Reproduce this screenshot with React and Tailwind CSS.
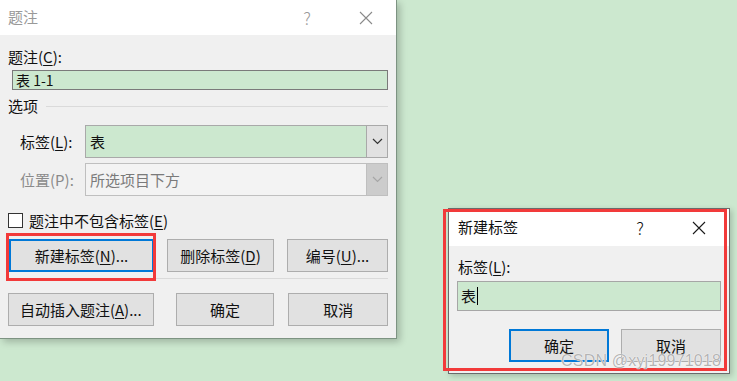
import React from "react";

const FONT = { fontFamily: '"Noto Sans CJK SC", "Noto Sans", sans-serif' };

const U = ({ children }) => <span className="underline underline-offset-2">{children}</span>;

const CloseIcon = ({ color = "#1a1a1a" }) => (
  <svg width="14" height="14" viewBox="0 0 14 14">
    <path d="M1 1L13 13M13 1L1 13" stroke={color} strokeWidth="1.1" fill="none" />
  </svg>
);

const Chevron = ({ color = "#333" }) => (
  <svg width="11" height="7" viewBox="0 0 11 7">
    <path d="M1 1L5.5 5.5L10 1" stroke={color} strokeWidth="1.2" fill="none" />
  </svg>
);

const Btn = ({ w, focus, className = "", children }) => (
  <div
    className={`h-[33px] flex items-center justify-center bg-[#e1e1e1] text-[15px] text-[#111] ${
      focus ? "border-2 border-[#0078d7]" : "border border-[#adadad]"
    } ${className}`}
    style={{ width: w }}
  >
    {children}
  </div>
);

function CaptionDialog() {
  return (
    <div className="absolute left-0 top-0 w-[397px] h-[339px] bg-[#f0f0f0] border-r border-b border-[#7d9382] shadow-[3px_3px_7px_rgba(0,0,0,0.22)] flex flex-col">
      {/* Title bar */}
      <div className="h-[35px] bg-white flex items-center pl-[8px] text-[15px] text-[#999]">
        <span>题注</span>
        <span className="ml-auto mr-[48px] text-[17px] text-[#9a9a9a] font-light">?</span>
        <span className="mr-[23px] flex"><CloseIcon color="#8a8a8a" /></span>
      </div>

      <div className="flex flex-col px-[8px] text-[15px] text-[#111] leading-[20px]">
        <div className="mt-[12px]">题注(<U>C</U>):</div>
        <div className="mt-[3px] ml-[4px] h-[20px] border border-[#7a7a7a] bg-[#cce8cf] flex items-center pl-[3px] text-[14px] leading-none">
          表 1-1
        </div>

        <div className="mt-[6px] flex items-center">
          <span>选项</span>
          <div className="flex-1 h-px bg-[#dadada] ml-[8px]" />
        </div>

        {/* 标签 */}
        <div className="mt-[9px] flex items-center h-[33px]">
          <span className="ml-[12px] w-[65px]">标签(<U>L</U>):</span>
          <div className="flex-1 h-full border border-[#a9a9a9] bg-[#cce8cf] flex">
            <span className="flex-1 flex items-center pl-[4px]">表</span>
            <span className="w-[21px] border-l border-[#a9a9a9] bg-[#e1e1e1] flex items-center justify-center">
              <Chevron />
            </span>
          </div>
        </div>

        {/* 位置 */}
        <div className="mt-[5px] flex items-center h-[33px]">
          <span className="ml-[12px] w-[65px] text-[#8a8a8a]">位置(P):</span>
          <div className="flex-1 h-full border border-[#bfbfbf] bg-[#f3f3f3] flex">
            <span className="flex-1 flex items-center pl-[4px] text-[#7a7a7a]">所选项目下方</span>
            <span className="w-[21px] border-l border-[#bfbfbf] bg-[#cccccc] flex items-center justify-center">
              <Chevron color="#a6a6a6" />
            </span>
          </div>
        </div>

        {/* checkbox */}
        <div className="mt-[17px] flex items-center h-[15px]">
          <div className="w-[15px] h-[15px] border border-[#333] bg-white" />
          <span className="ml-[6px]">题注中不包含标签(<U>E</U>)</span>
        </div>

        <div className="mt-[11px] flex">
          <Btn w={145} focus className="ml-[1px]">新建标签(<U>N</U>)...</Btn>
          <Btn w={107} className="ml-[13px]">删除标签(<U>D</U>)</Btn>
          <Btn w={101} className="ml-[13px]">编号(<U>U</U>)...</Btn>
        </div>

        <div className="mt-[6px] h-px bg-[#dadada]" />

        <div className="mt-[14px] flex">
          <Btn w={146}>自动插入题注(<U>A</U>)...</Btn>
          <Btn w={99} className="ml-[22px]">确定</Btn>
          <Btn w={100} className="ml-[14px]">取消</Btn>
        </div>
      </div>
    </div>
  );
}

function NewLabelDialog() {
  return (
    <div className="absolute left-[448px] top-[208px] w-[282px] h-[166px] bg-[#f0f0f0] border border-[#6b6b6b] shadow-[2px_2px_6px_rgba(0,0,0,0.2)] flex flex-col">
      <div className="h-[37px] bg-white flex items-center pl-[9px] text-[15px] text-[#111]">
        <span>新建标签</span>
        <span className="ml-auto mr-[48px] text-[17px] font-light">?</span>
        <span className="mr-[23px] flex"><CloseIcon /></span>
      </div>
      <div className="flex flex-col px-[8px] text-[15px] text-[#111] leading-[20px]">
        <div className="mt-[11px] ml-[1px]">标签(<U>L</U>):</div>
        <div className="mt-[4px] h-[30px] border border-[#a6a6a6] bg-[#cce8cf] flex items-center pl-[3px]">
          <span>表</span>
          <span className="w-px h-[18px] bg-black ml-[1px]" />
        </div>
        <div className="mt-[18px] flex justify-end">
          <Btn w={100} focus>确定</Btn>
          <Btn w={100} className="ml-[12px]">取消</Btn>
        </div>
      </div>
    </div>
  );
}

export default function App() {
  return (
    <div className="relative w-[737px] h-[381px] bg-[#cce8cf] overflow-hidden" style={FONT}>
      <CaptionDialog />
      <NewLabelDialog />

      {/* highlight boxes */}
      <div className="absolute left-[6px] top-[233px] w-[150px] h-[48px] border-[3px] border-[#f23a3a]" />
      <div className="absolute left-[443px] top-[209px] w-[284px] h-[162px] border-[3px] border-[#f23a3a]" />

      {/* watermark */}
      <div
        className="absolute left-[561px] top-[351px] text-[16px] leading-[20px] text-[#b4b4b4] tracking-[0.2px]"
        style={{ fontFamily: '"Liberation Sans", Arial, sans-serif', textShadow: "0 0 1px #fff, 0 0 1px #fff" }}
      >
        CSDN @xyj19971018
      </div>
    </div>
  );
}
